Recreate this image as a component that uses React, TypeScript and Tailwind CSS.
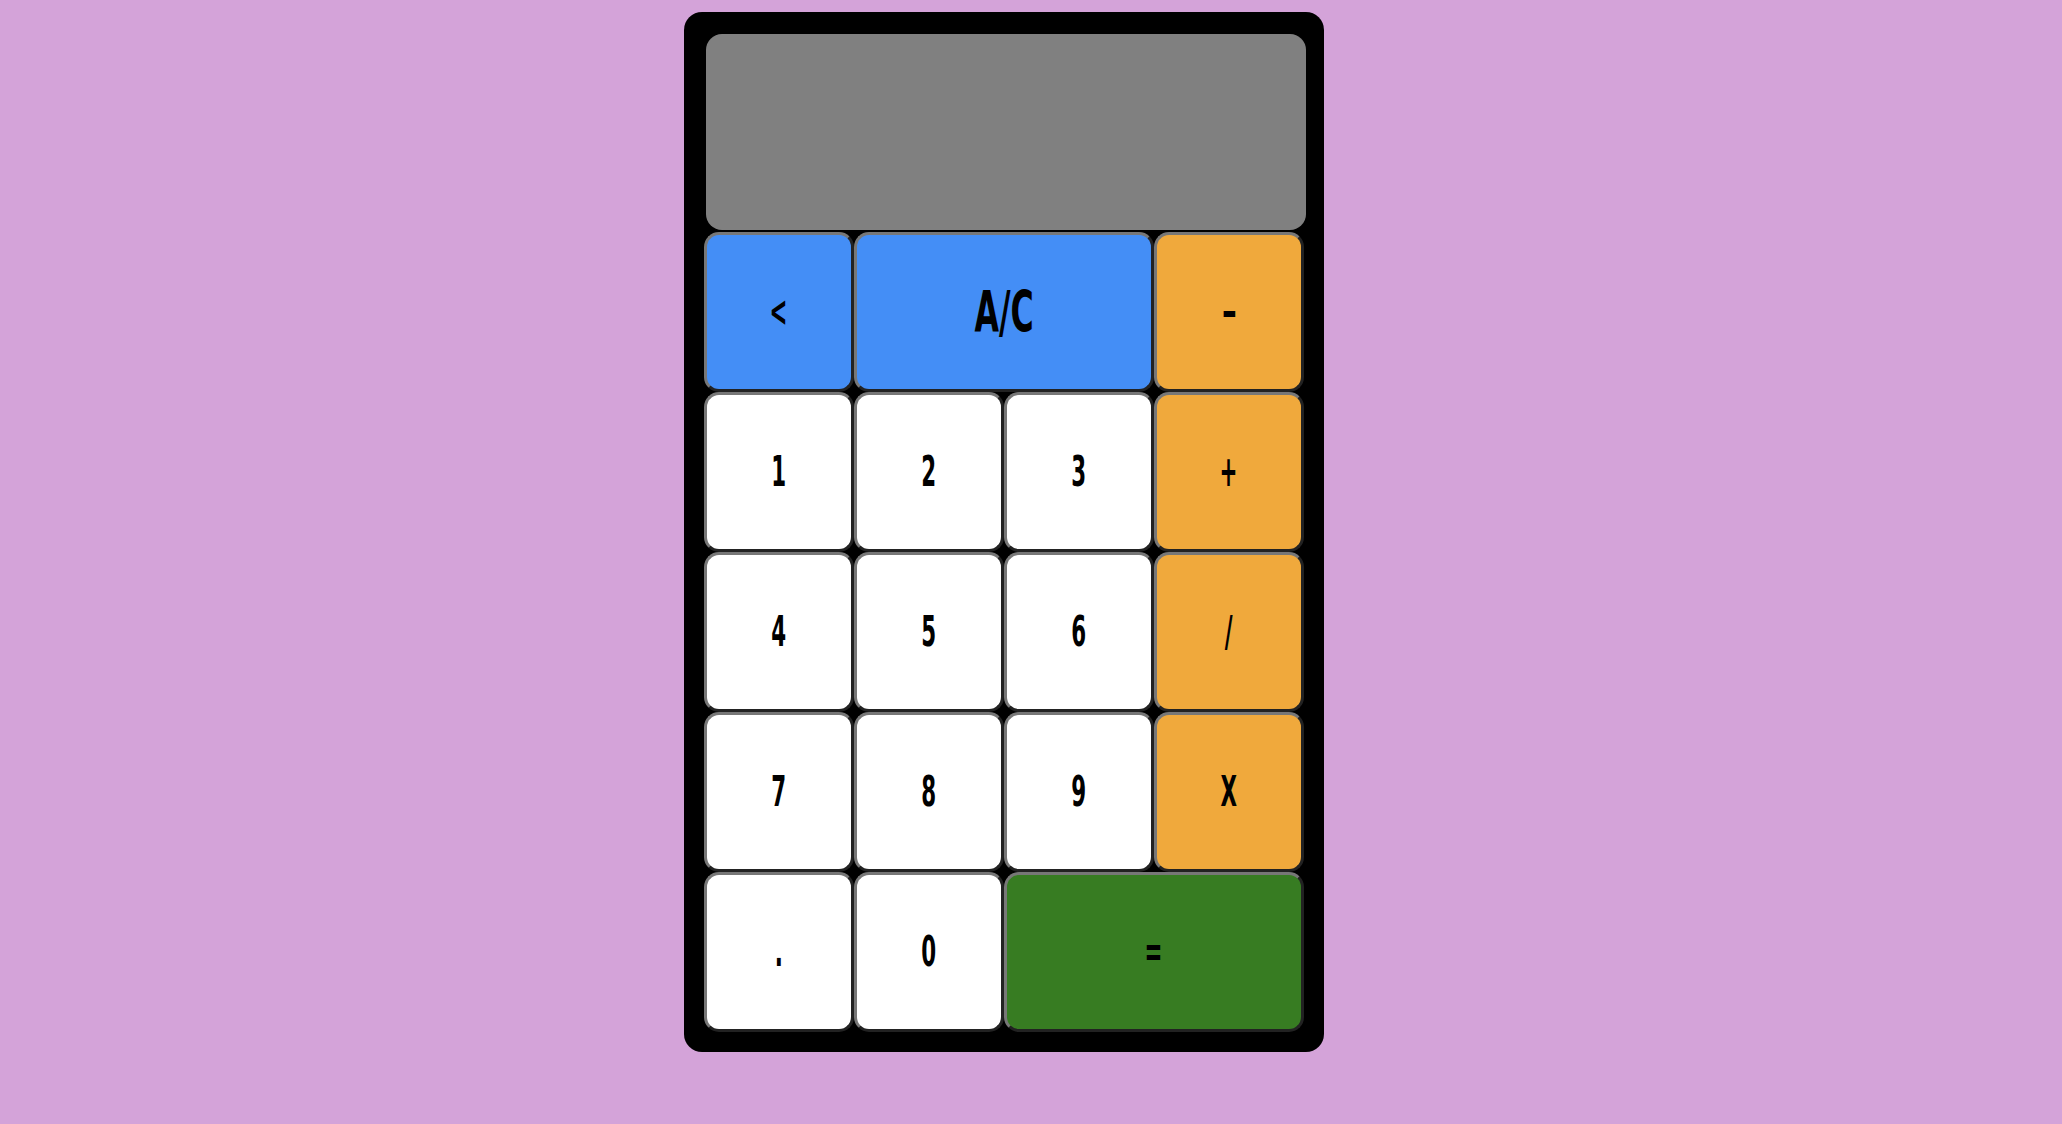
const keys = [
  { label: "<", cls: "bg-[#448ef6]", text: "text-[28px] scale-x-[0.85]", span: "" },
  { label: "A/C", cls: "bg-[#448ef6]", text: "text-[37px] scale-x-[0.95]", span: "col-span-2" },
  { label: "-", cls: "bg-[#f0a93c]", text: "text-[28px] scale-x-[1.5]", span: "" },
  { label: "1", cls: "bg-white", text: "text-[28px] scale-x-[0.85]", span: "" },
  { label: "2", cls: "bg-white", text: "text-[28px] scale-x-[0.85]", span: "" },
  { label: "3", cls: "bg-white", text: "text-[28px] scale-x-[0.85]", span: "" },
  { label: "+", cls: "bg-[#f0a93c]", text: "text-[28px] scale-x-[0.85]", span: "" },
  { label: "4", cls: "bg-white", text: "text-[28px] scale-x-[0.85]", span: "" },
  { label: "5", cls: "bg-white", text: "text-[28px] scale-x-[0.85]", span: "" },
  { label: "6", cls: "bg-white", text: "text-[28px] scale-x-[0.85]", span: "" },
  { label: "/", cls: "bg-[#f0a93c]", text: "text-[28px] scale-x-[0.85]", span: "" },
  { label: "7", cls: "bg-white", text: "text-[28px] scale-x-[0.85]", span: "" },
  { label: "8", cls: "bg-white", text: "text-[28px] scale-x-[0.85]", span: "" },
  { label: "9", cls: "bg-white", text: "text-[28px] scale-x-[0.85]", span: "" },
  { label: "X", cls: "bg-[#f0a93c]", text: "text-[28px] scale-x-[0.85]", span: "" },
  { label: ".", cls: "bg-white", text: "text-[28px] scale-x-[0.85]", span: "" },
  { label: "0", cls: "bg-white", text: "text-[28px] scale-x-[0.85]", span: "" },
  { label: "=", cls: "bg-[#377c22]", text: "text-[28px] scale-x-[0.85]", span: "col-span-2" },
];

export default function App() {
  return (
    <div className="min-h-screen w-full bg-[#d4a3d9] pt-[12px] pl-[684px]">
      <div className="w-[640px] h-[1040px] rounded-[18px] bg-black p-[20px] font-['DejaVu_Sans_Condensed','Liberation_Sans',sans-serif] font-bold text-black">
        <div className="m-[2px] w-[600px] h-[196px] rounded-[16px] bg-[#808080]" />
        <div className="grid grid-cols-4 auto-rows-[160px]">
          {keys.map((k, i) => (
            <button
              key={i}
              className={`${k.cls} ${k.span} flex items-center justify-center rounded-[15px] border-[3px] border-t-[#777777] border-l-[#777777] border-b-[#222222] border-r-[#222222]`}
            >
              <span className={`inline-block scale-y-[1.55] leading-none ${k.text}`}>
                {k.label}
              </span>
            </button>
          ))}
        </div>
      </div>
    </div>
  );
}
